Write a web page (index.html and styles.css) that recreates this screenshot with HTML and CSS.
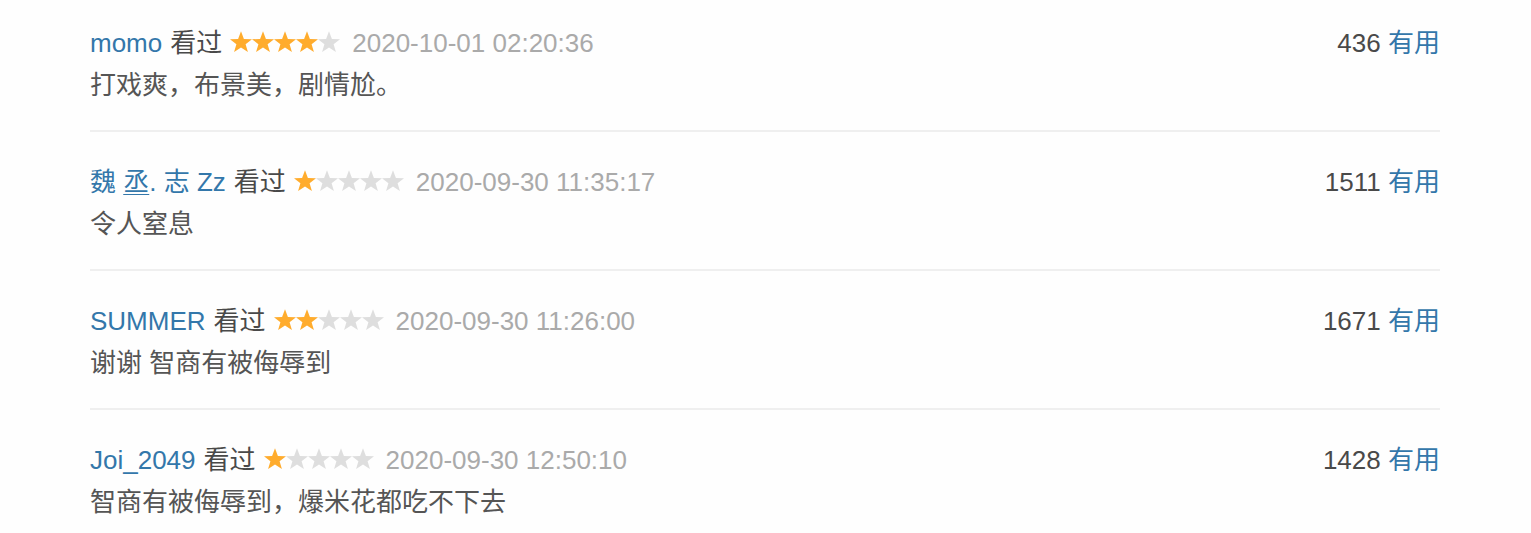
FILE: index.html
```html
<!DOCTYPE html>
<html lang="zh-CN">
<head>
<meta charset="utf-8">
<title>短评</title>
<link rel="stylesheet" href="styles.css">
</head>
<body>
<svg class="defs" width="0" height="0" aria-hidden="true">
  <defs>
    <polygon id="star" points="11,0.2 13.9,7.9 22,8.2 15.6,13.2 17.9,21.1 11,16.6 4.1,21.1 6.4,13.2 0,8.2 8.1,7.9"/>
  </defs>
</svg>
<div class="list">
  <div class="item">
    <div class="head">
      <div class="info">
        <a class="name" href="#">momo</a>
        <span class="seen">看过</span>
        <svg class="stars" width="110" height="22" viewBox="0 0 110 22"><use href="#star" x="0" class="on"/><use href="#star" x="22" class="on"/><use href="#star" x="44" class="on"/><use href="#star" x="66" class="on"/><use href="#star" x="88" class="off"/></svg>
        <span class="time">2020-10-01 02:20:36</span>
      </div>
      <div class="votes"><span class="count">436</span> <a class="useful" href="#">有用</a></div>
    </div>
    <p class="short">打戏爽，布景美，剧情尬。</p>
  </div>
  <div class="item">
    <div class="head">
      <div class="info">
        <a class="name" href="#">魏 <span class="ul">丞</span>. 志 Zz</a>
        <span class="seen">看过</span>
        <svg class="stars" width="110" height="22" viewBox="0 0 110 22"><use href="#star" x="0" class="on"/><use href="#star" x="22" class="off"/><use href="#star" x="44" class="off"/><use href="#star" x="66" class="off"/><use href="#star" x="88" class="off"/></svg>
        <span class="time">2020-09-30 11:35:17</span>
      </div>
      <div class="votes"><span class="count">1511</span> <a class="useful" href="#">有用</a></div>
    </div>
    <p class="short">令人窒息</p>
  </div>
  <div class="item">
    <div class="head">
      <div class="info">
        <a class="name" href="#">SUMMER</a>
        <span class="seen">看过</span>
        <svg class="stars" width="110" height="22" viewBox="0 0 110 22"><use href="#star" x="0" class="on"/><use href="#star" x="22" class="on"/><use href="#star" x="44" class="off"/><use href="#star" x="66" class="off"/><use href="#star" x="88" class="off"/></svg>
        <span class="time">2020-09-30 11:26:00</span>
      </div>
      <div class="votes"><span class="count">1671</span> <a class="useful" href="#">有用</a></div>
    </div>
    <p class="short">谢谢 智商有被侮辱到</p>
  </div>
  <div class="item">
    <div class="head">
      <div class="info">
        <a class="name" href="#">Joi_2049</a>
        <span class="seen">看过</span>
        <svg class="stars" width="110" height="22" viewBox="0 0 110 22"><use href="#star" x="0" class="on"/><use href="#star" x="22" class="off"/><use href="#star" x="44" class="off"/><use href="#star" x="66" class="off"/><use href="#star" x="88" class="off"/></svg>
        <span class="time">2020-09-30 12:50:10</span>
      </div>
      <div class="votes"><span class="count">1428</span> <a class="useful" href="#">有用</a></div>
    </div>
    <p class="short">智商有被侮辱到，爆米花都吃不下去</p>
  </div>
</div>
</body>
</html>
```

FILE: styles.css
```css
html, body {
  margin: 0;
  padding: 0;
  background: #fefefe;
}
body {
  font-family: "Liberation Sans", "Noto Sans CJK SC", sans-serif;
  font-size: 26px;
  color: #494949;
}
.defs {
  position: absolute;
  width: 0;
  height: 0;
  overflow: hidden;
}
.list {
  padding: 23px 91px 0 90px;
}
.item {
  padding: 30px 0 25px;
  border-bottom: 2px solid #efefef;
}
.item:first-child {
  padding-top: 0;
}
.head {
  display: flex;
  justify-content: space-between;
  align-items: center;
  height: 40px;
  line-height: 40px;
}
.info {
  display: flex;
  align-items: center;
  white-space: nowrap;
}
.name {
  color: #3377aa;
  text-decoration: none;
}
.name .ul {
  text-decoration: underline;
  text-underline-offset: 3px;
  text-decoration-thickness: 1px;
}
.seen {
  margin-left: 8px;
  color: #494949;
}
.stars {
  margin-left: 8px;
  margin-top: -3px;
  display: block;
}
.stars .on {
  fill: #ffac2d;
}
.stars .off {
  fill: #dedede;
}
.time {
  margin-left: 12px;
  font-size: 26px;
  color: #aaaaaa;
}
.votes {
  white-space: nowrap;
}
.count {
  color: #494949;
}
.useful {
  color: #3377aa;
  text-decoration: none;
}
.short {
  margin: 2px 0 0;
  height: 40px;
  line-height: 40px;
  color: #555555;
}
```
